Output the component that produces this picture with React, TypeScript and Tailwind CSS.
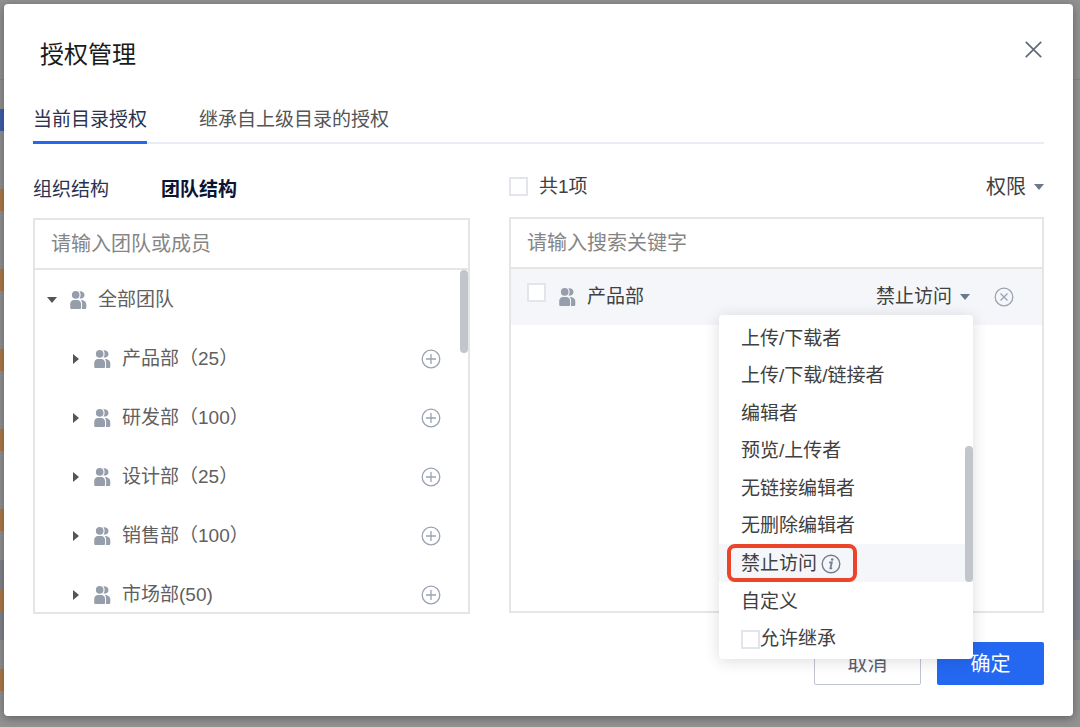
import { useState } from "react";

interface Team {
  id: string;
  label: string;
}

const TEAMS: Team[] = [
  { id: "product", label: "产品部（25）" },
  { id: "rd", label: "研发部（100）" },
  { id: "design", label: "设计部（25）" },
  { id: "sales", label: "销售部（100）" },
  { id: "market", label: "市场部(50)" },
];

const ROLES = [
  "上传/下载者",
  "上传/下载/链接者",
  "编辑者",
  "预览/上传者",
  "无链接编辑者",
  "无删除编辑者",
  "禁止访问",
  "自定义",
];

const BACK_ROWS = ["blue", "orange", "orange", "orange", "orange", "orange", "orange", "orange"];

function TeamIcon() {
  return (
    <svg width="17" height="18" viewBox="0 0 17 18" fill="#969eab" className="shrink-0" aria-hidden="true">
      <circle cx="5.7" cy="3.9" r="3.8" />
      <path d="M0.2 13.2C0.200 10.600 1.800 8.900 4 8.900h3.300c2.200 0 3.800 1.700 3.800 4.300v3.200c0 1-.6 1.600-1.600 1.600H1.800c-1 0-1.600-.6-1.600-1.600z" />
      <path d="M9.300 0.300c3-.4 5.200 1.200 5.200 3.600s-2.200 4-5.200 3.600c.8-.9 1.300-2.200 1.300-3.600S10.100 1.200 9.300.300z" />
      <path d="M10.800 9c3.200 0 5.500 1.700 5.500 4.400v3c0 1-.6 1.600-1.600 1.600H11.800c.2-.5.3-1 .3-1.600v-3.200c0-1.700-.4-3.200-1.300-4.200z" />
    </svg>
  );
}

function Caret({ className }: { className: string }) {
  return (
    <svg width="10" height="6" viewBox="0 0 10 6" className={className} fill="currentColor" aria-hidden="true">
      <path d="M0 0h10L5 6z" />
    </svg>
  );
}

function CircleIcon({ d }: { d: string }) {
  return (
    <svg width="20" height="20" viewBox="0 0 20 20" fill="none" stroke="#9ba3b2" strokeWidth="1.3" aria-hidden="true">
      <circle cx="10" cy="10" r="8.8" />
      <path d={d} />
    </svg>
  );
}

const checkboxClass = "size-[19px] shrink-0 appearance-none border-2 border-[#e3e5ec] bg-white checked:bg-[#2468f2]";

export default function App() {
  const [tab, setTab] = useState("current");
  const [keyword, setKeyword] = useState("");
  const [member, setMember] = useState("");
  const [role, setRole] = useState("禁止访问");
  const [menuOpen, setMenuOpen] = useState(true);

  const tabClass = (active: boolean) =>
    active
      ? "-mb-0.5 h-12 border-b-3 border-[#2468f2] pt-0.5 text-[#2b3350]"
      : "-mb-0.5 h-12 border-b-3 border-transparent pt-0.5 text-[#555]";

  return (
    <div className="relative min-h-screen overflow-hidden bg-[#929292] pt-1 pr-[7px] pb-[11px] pl-1 font-['Liberation_Sans','Noto_Sans_CJK_SC',sans-serif] text-[19px] leading-7 text-[#404040]">
      {/* 遮罩后面的文件列表 */}
      <div className="absolute inset-0" aria-hidden="true">
        <div className="h-20 border-b border-[#868686]" />
        {BACK_ROWS.map((color, i) => (
          <div key={i} className={i === 6 ? "flex h-20 items-center bg-[#82848c]" : "flex h-20 items-center"}>
            <span className={color === "blue" ? "h-[22px] w-2 bg-[#3f5fae]" : "h-[22px] w-2 bg-[#b07a48]"} />
          </div>
        ))}
      </div>

      <section
        role="dialog"
        aria-labelledby="dialog-title"
        className="relative rounded bg-white px-[29px] pt-[33px] pb-[31px] shadow-[0_2px_10px_rgba(0,0,0,0.35)]"
      >
        <header className="flex items-center justify-between pl-[7px]">
          <h1 id="dialog-title" className="text-2xl leading-9 text-[#1a1a1a]">授权管理</h1>
          <button type="button" aria-label="关闭" className="mb-3 pr-0.5">
            <svg width="17" height="17" viewBox="0 0 17 17" stroke="#5f6b7c" strokeWidth="1.7" fill="none">
              <path d="M.8.8l15.400 15.400M16.200.8L.8 16.200" />
            </svg>
          </button>
        </header>

        <nav className="mt-[23px] flex gap-[52px] border-b-2 border-[#ebedf4]">
          <button type="button" className={tabClass(tab === "current")} onClick={() => setTab("current")}>
            当前目录授权
          </button>
          <button type="button" className={tabClass(tab === "inherit")} onClick={() => setTab("inherit")}>
            继承自上级目录的授权
          </button>
        </nav>

        <div className="grid grid-cols-[437fr_535fr] gap-[39px]">
          <div>
            <div className="flex h-[74px] items-center gap-[52px] pt-[18px] text-[#2b3350]">
              <button type="button">组织结构</button>
              <button type="button" className="font-bold text-[#0c1433]">团队结构</button>
            </div>
            <div className="relative flex h-[396px] flex-col overflow-hidden border-2 border-[#e5e5e5]">
              <input
                type="text"
                aria-label="团队或成员"
                value={member}
                onChange={(e) => setMember(e.target.value)}
                placeholder="请输入团队或成员"
                className="h-[50px] shrink-0 border-b-2 border-[#e5e5e5] px-4 text-xl outline-none placeholder:text-[#858585]"
              />
              <ul className="min-h-0 flex-1 overflow-hidden text-[#606060]">
                <li className="flex h-[59px] items-center pl-3">
                  <Caret className="mr-[13px] text-[#555]" />
                  <TeamIcon />
                  <span className="ml-[11px]">全部团队</span>
                </li>
                {TEAMS.map((team) => (
                  <li key={team.id} className="flex h-[59px] items-center pr-[27px] pl-9">
                    <Caret className="mr-[13px] -rotate-90 text-[#555]" />
                    <TeamIcon />
                    <span className="ml-[11px] flex-1">{team.label}</span>
                    <button type="button" aria-label="添加">
                      <CircleIcon d="M10 5v10M5 10h10" />
                    </button>
                  </li>
                ))}
              </ul>
              <div className="absolute top-[50px] right-0 h-[83px] w-2 rounded-full bg-[#c2c6ca]" />
            </div>
          </div>

          <div>
            <div className="flex h-[73px] items-center justify-between pt-3">
              <label className="flex items-center gap-[11px]">
                <input type="checkbox" className={checkboxClass} />
                共1项
              </label>
              <label className="flex items-center gap-2">
                <select aria-label="权限" className="appearance-none text-xl outline-none">
                  <option>权限</option>
                </select>
                <Caret className="text-[#697a8c]" />
              </label>
            </div>
            <div className="h-[396px] border-2 border-[#e5e5e5]">
              <input
                type="text"
                aria-label="搜索关键字"
                value={keyword}
                onChange={(e) => setKeyword(e.target.value)}
                placeholder="请输入搜索关键字"
                className="h-[50px] w-full border-b-2 border-[#e5e5e5] px-4 text-xl outline-none placeholder:text-[#858585]"
              />
              <div className="flex h-14 items-center bg-[#f5f6fa] pr-7 pl-4">
                <label className="flex flex-1 items-center self-stretch">
                  <input type="checkbox" className="mt-3.5 size-[19px] shrink-0 appearance-none self-start border-2 border-[#e3e5ec] bg-white checked:bg-[#2468f2]" />
                  <span className="mr-[11px] ml-[13px]">
                    <TeamIcon />
                  </span>
                  产品部
                </label>
                <div className="relative">
                  <button
                    type="button"
                    aria-haspopup="menu"
                    aria-expanded={menuOpen}
                    onClick={() => setMenuOpen(!menuOpen)}
                    className="flex h-9 items-center gap-2"
                  >
                    {role}
                    <Caret className="text-[#697a8c]" />
                  </button>
                  {menuOpen && (
                    <div className="absolute top-full -right-[3px] z-10 flex h-[344px] w-[254px] flex-col rounded-sm bg-white pt-1 pb-0.5 shadow-[0_2px_16px_rgba(0,0,0,0.14)]">
                      {ROLES.map((item) =>
                        item === role ? (
                          <button
                            key={item}
                            type="button"
                            onClick={() => setMenuOpen(false)}
                            className="flex flex-1 items-stretch bg-[#f5f6fa] pl-2 text-left"
                          >
                            <span className="flex items-center gap-1 rounded-lg border-4 border-[#ec4429] px-2.5 pt-0.5 pr-3">
                              {item}
                              <svg width="20" height="20" viewBox="0 0 20 20" fill="none" stroke="#74808f" strokeWidth="1.4" aria-hidden="true">
                                <circle cx="10" cy="10" r="8.8" />
                                <path d="M8.200 8.500h2.600L9.400 14.300h1.800" strokeWidth="1.8" />
                                <circle cx="11.200" cy="5.500" r="1.300" fill="#74808f" stroke="none" />
                              </svg>
                            </span>
                          </button>
                        ) : (
                          <button
                            key={item}
                            type="button"
                            onClick={() => setRole(item)}
                            className="flex flex-1 items-center pt-0.5 pl-[22px] text-left"
                          >
                            {item}
                          </button>
                        ),
                      )}
                      <label className="flex flex-1 items-center pt-0.5 pl-[22px]">
                        <input type="checkbox" className={checkboxClass} />
                        允许继承
                      </label>
                      <div className="absolute right-0 bottom-[77px] h-[136px] w-2 rounded-full bg-[#c2c6ca]" />
                    </div>
                  )}
                </div>
                <button type="button" aria-label="移除" className="ml-6">
                  <CircleIcon d="M6.500 6.500l7 7M13.500 6.500l-7 7" />
                </button>
              </div>
            </div>
          </div>
        </div>

        <footer className="mt-7 flex justify-end gap-4 text-xl">
          <button type="button" className="h-[43px] w-[107px] rounded-xs border border-[#c0c4ce] text-[#5a6072]">
            取消
          </button>
          <button type="button" className="h-[43px] w-[107px] rounded-xs bg-[#2468f2] text-white">
            确定
          </button>
        </footer>
      </section>
    </div>
  );
}
